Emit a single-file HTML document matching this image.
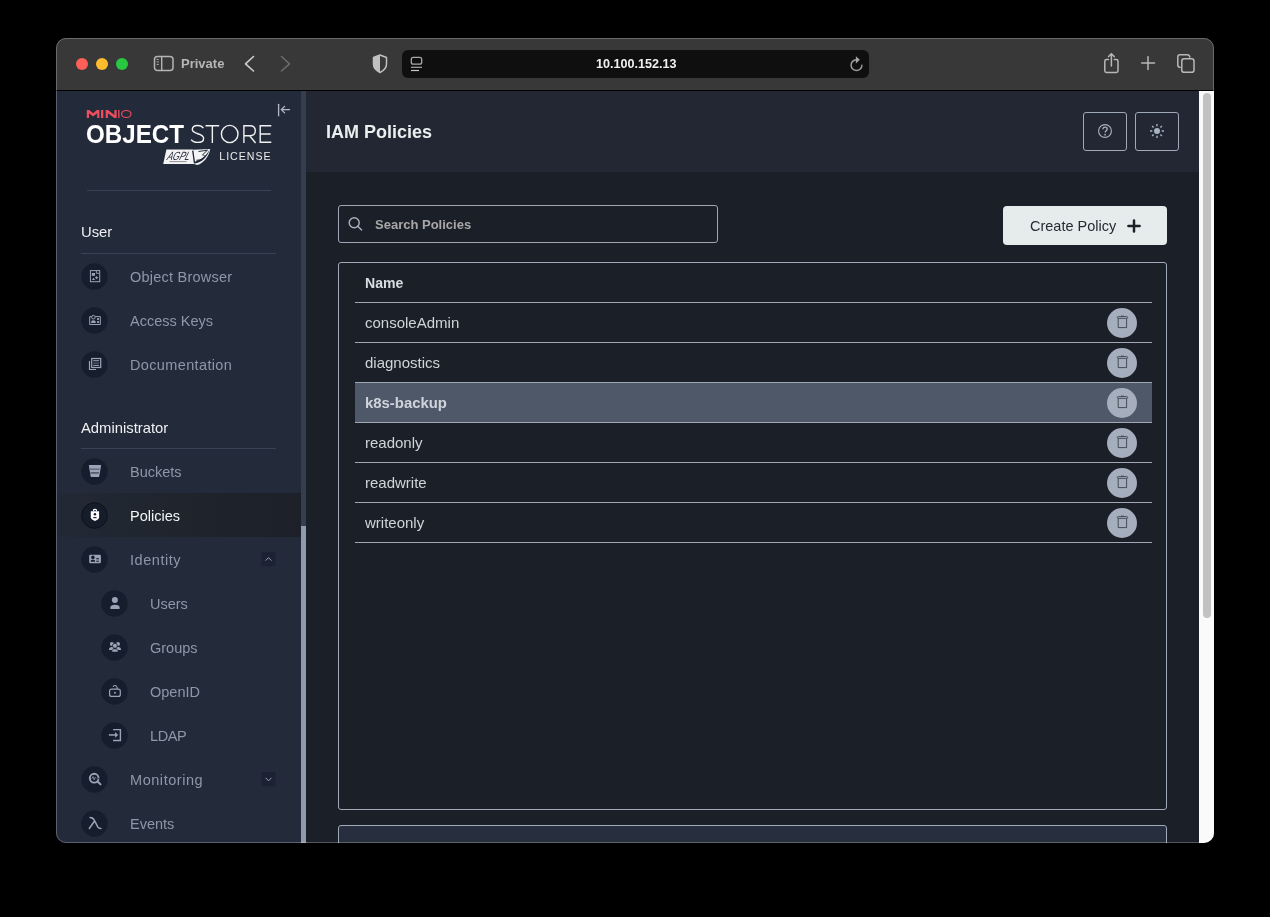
<!DOCTYPE html>
<html><head><meta charset="utf-8">
<style>
*{margin:0;padding:0;box-sizing:border-box}
html,body{width:1270px;height:917px;background:#000;overflow:hidden;font-family:"Liberation Sans",sans-serif;-webkit-font-smoothing:antialiased}
#pg div{will-change:transform}
.a{position:absolute}
#win{position:absolute;left:56px;top:38px;width:1158px;height:805px;border-radius:10px;overflow:hidden;background:#232b3b}
#pg{position:absolute;left:-56px;top:-38px;width:1270px;height:917px}
#winborder{position:absolute;left:56px;top:38px;width:1158px;height:805px;border-radius:10px;border:1px solid rgba(255,255,255,0.25);pointer-events:none}
.dot{position:absolute;width:12px;height:12px;border-radius:50%;top:58px}
.sec{will-change:transform;position:absolute;left:81px;font-size:14.8px;color:#eef0f2;line-height:18px}
.hr{position:absolute;height:1px;background:#394254}
.item{will-change:transform;position:absolute;font-size:14.5px;color:#8e97a7;line-height:18px}
.circ{position:absolute;width:26px;height:26px;border-radius:50%;background:#172030}
.circ svg{position:absolute;left:0;top:0}
.tline{position:absolute;left:355px;width:797px;height:1px;background:#a0a8b6}
.rowtxt{will-change:transform;position:absolute;left:365px;font-size:15px;color:#d0d4da;line-height:18px}
.del{position:absolute;left:1107px;width:30px;height:30px;border-radius:50%;background:#9ea7b6}
</style></head><body>
<div id="win"><div id="pg">
  <!-- toolbar -->
  <div class="a" style="left:56px;top:38px;width:1158px;height:52px;background:#383838"></div>
  <div class="a" style="left:56px;top:90px;width:1158px;height:1px;background:#000"></div>
  <div class="dot" style="left:76px;background:#fe5f57"></div>
  <div class="dot" style="left:96px;background:#febc2e"></div>
  <div class="dot" style="left:116px;background:#28c840"></div>
  <svg class="a" style="left:150px;top:50px" width="30" height="26" viewBox="0 0 30 26">
    <rect x="4.5" y="6.5" width="18.5" height="14" rx="3" fill="none" stroke="#b4b4b4" stroke-width="1.5"/>
    <line x1="11.7" y1="6.5" x2="11.7" y2="20.5" stroke="#b4b4b4" stroke-width="1.4"/>
    <line x1="6.7" y1="9.4" x2="8.7" y2="9.4" stroke="#b4b4b4" stroke-width="1"/>
    <line x1="6.7" y1="11.9" x2="8.7" y2="11.9" stroke="#b4b4b4" stroke-width="1"/>
    <line x1="6.7" y1="14.4" x2="8.7" y2="14.4" stroke="#b4b4b4" stroke-width="1"/>
  </svg>
  <div class="a" style="left:181px;top:56px;font-size:13px;font-weight:bold;color:#b6b6b6;line-height:16px">Private</div>
  <svg class="a" style="left:240px;top:52px" width="20" height="24" viewBox="0 0 20 24">
    <polyline points="13.5,4.5 5.5,11.8 13.5,19" fill="none" stroke="#cfcfcf" stroke-width="1.6" stroke-linecap="round" stroke-linejoin="round"/>
  </svg>
  <svg class="a" style="left:276px;top:52px" width="20" height="24" viewBox="0 0 20 24">
    <polyline points="5.5,4.5 13.5,11.8 5.5,19" fill="none" stroke="#6a6a6a" stroke-width="1.6" stroke-linecap="round" stroke-linejoin="round"/>
  </svg>
  <svg class="a" style="left:370px;top:52px" width="20" height="24" viewBox="0 0 20 24">
    <path d="M10 3 L16.5 5.5 L16.5 12 C16.5 16 13.5 18.8 10 20.5 C6.5 18.8 3.5 16 3.5 12 L3.5 5.5 Z" fill="none" stroke="#c0c0c0" stroke-width="1.5" stroke-linejoin="round"/>
    <path d="M10 3 L3.5 5.5 L3.5 12 C3.5 16 6.5 18.8 10 20.5 Z" fill="#c0c0c0"/>
  </svg>
  <div class="a" style="left:402px;top:50px;width:467px;height:28px;border-radius:6px;background:#0f0f0f"></div>
  <svg class="a" style="left:408px;top:54px" width="18" height="20" viewBox="0 0 18 20">
    <rect x="3.3" y="3.3" width="10.4" height="6.9" rx="2" fill="none" stroke="#a8a8a8" stroke-width="1.3"/>
    <line x1="3" y1="13.3" x2="14" y2="13.3" stroke="#a8a8a8" stroke-width="1.2"/>
    <line x1="3" y1="16.5" x2="11" y2="16.5" stroke="#c8c8c8" stroke-width="1.2"/>
  </svg>
  <div class="a" style="left:596px;top:56px;font-size:12.6px;font-weight:bold;color:#f0f0f0;line-height:16px">10.100.152.13</div>
  <svg class="a" style="left:846px;top:52px" width="22" height="24" viewBox="846 52 22 24">
    <path d="M861.9 65.2 A5.4 5.4 0 1 1 856.3 59.7" fill="none" stroke="#9c9c9c" stroke-width="1.5" stroke-linecap="round"/>
    <polygon points="855.9,56.2 859.8,59.8 855.9,63.4" fill="#a8a8a8"/>
  </svg>
  <svg class="a" style="left:1100px;top:50px" width="24" height="26" viewBox="0 0 24 26">
    <path d="M8.5 9.5 L6.5 9.5 Q4.8 9.5 4.8 11.2 L4.8 20.8 Q4.8 22.5 6.5 22.5 L16.3 22.5 Q18 22.5 18 20.8 L18 11.2 Q18 9.5 16.3 9.5 L14.3 9.5" fill="none" stroke="#b8b8b8" stroke-width="1.5" stroke-linecap="round"/>
    <line x1="11.4" y1="4" x2="11.4" y2="16" stroke="#b8b8b8" stroke-width="1.5" stroke-linecap="round"/>
    <polyline points="8.6,6.6 11.4,3.7 14.2,6.6" fill="none" stroke="#b8b8b8" stroke-width="1.5" stroke-linecap="round" stroke-linejoin="round"/>
  </svg>
  <svg class="a" style="left:1138px;top:53px" width="20" height="20" viewBox="0 0 20 20">
    <line x1="3.7" y1="10" x2="16.5" y2="10" stroke="#b8b8b8" stroke-width="1.5" stroke-linecap="round"/>
    <line x1="10" y1="3.7" x2="10" y2="16.5" stroke="#b8b8b8" stroke-width="1.5" stroke-linecap="round"/>
  </svg>
  <svg class="a" style="left:1174px;top:51px" width="24" height="24" viewBox="0 0 24 24">
    <path d="M6.7 16.5 Q3.8 16.5 3.8 14 L3.8 6 Q3.8 3.8 6 3.8 L13.5 3.8 Q15.7 3.8 15.9 6.8" fill="none" stroke="#b8b8b8" stroke-width="1.5"/>
    <rect x="7.8" y="7.8" width="12.2" height="13.5" rx="2.4" fill="none" stroke="#b8b8b8" stroke-width="1.5"/>
  </svg>

  <!-- sidebar -->
  <div class="a" style="left:56px;top:91px;width:245px;height:752px;background:#232b3b"></div>
  <div class="a" style="left:301px;top:91px;width:5px;height:752px;background:#353e4f"></div>
  <div class="a" style="left:301px;top:526px;width:5px;height:317px;background:#8f9aae"></div>

  <!-- logo -->
  <svg class="a" style="left:0;top:0" width="310" height="200" viewBox="0 0 310 200">
    <g fill="#ee4d5d">
      <polygon points="86.8,118 86.8,110 89.3,110 93.1,113.3 96.9,110 99.4,110 99.4,118 97.2,118 97.2,113.3 93.1,116.4 89,113.3 89,118"/>
      <polygon points="105.7,118 105.7,110 108,110 114.4,114.9 114.4,110 116.6,110 116.6,118 114.3,118 107.9,113.2 107.9,118"/>
    </g>
    <rect x="101" y="110" width="2.3" height="8" fill="#ee4d5d"/>
    <rect x="118.2" y="110" width="1.3" height="8" fill="#ee4d5d"/>
    <ellipse cx="126.3" cy="114" rx="4.7" ry="3.5" fill="none" stroke="#ee4d5d" stroke-width="1.2"/>
    <text x="86" y="143" font-family="Liberation Sans" font-weight="bold" font-size="25" fill="#ffffff" textLength="98" lengthAdjust="spacingAndGlyphs">OBJECT</text>
    <g fill="none" stroke="#f2f2f2" stroke-width="1.4">
      <path d="M203.3 128.2 C202 126 199.8 125.5 197.6 125.5 C194.2 125.5 192.3 127.3 192.3 129.6 C192.3 134.8 203.6 132.6 203.6 138.4 C203.6 141 201.2 142.4 197.6 142.4 C194.6 142.4 192.3 141.4 191.2 139.6"/>
      <path d="M205.5 125.7 H219.2 M212.35 125.7 V143"/>
      <ellipse cx="229.7" cy="134" rx="8.3" ry="8.6"/>
      <path d="M243.9 143 V125.7 H249.8 C253.4 125.7 255.3 127.9 255.3 130.7 C255.3 133.5 253.4 135.7 249.8 135.7 H243.9 M249.6 135.7 L255.6 143"/>
      <path d="M271.3 125.7 H260.2 V142.3 H271.3 M260.2 134 H270.6"/>
    </g>
    <path d="M166.4 149.5 L193 149.5 L194 163.9 L163.2 163.9 Z" fill="#f4f4f4"/>
    <path d="M193 149.7 L210.2 149 C209.5 155.5 203.5 163.5 197.2 165 L194 163.9 Z" fill="#f4f4f4"/>
    <g transform="translate(166.5,159.6) skewX(-18)"><text x="0" y="0" font-family="Liberation Sans" font-style="italic" font-size="12" fill="#232b3b" textLength="22.5" lengthAdjust="spacingAndGlyphs">AGPL</text></g>
    <rect x="169.5" y="161.2" width="17" height="0.9" fill="#232b3b" opacity="0.55"/>
    <path d="M192.7 150.6 L194.6 163.4" stroke="#232b3b" stroke-width="1.3" fill="none"/>
    <path d="M194.6 163.6 C201.5 163.2 208 156.5 209.6 149.6 C207 155 201 160.5 195.5 161.2 Z" fill="#232b3b"/>
    <path d="M198.5 151.5 C202 151 205 150.5 207.5 150.2 L202.5 154.8 C205 155 205.5 157 203 158.5 C201 159.8 198.5 160.2 196.5 160.2" fill="none" stroke="#232b3b" stroke-width="1"/>
    <text x="219.3" y="159.8" font-family="Liberation Sans" font-size="10.6" fill="#ececec" textLength="51.2" lengthAdjust="spacing">LICENSE</text>
    <g fill="none" stroke="#b3b8c2" stroke-width="1.3" stroke-linecap="round">
      <path d="M278.6 104.3 V115.8"/>
      <path d="M281.5 109.6 H289.6 M284.6 106.4 L281.4 109.6 L284.6 112.9"/>
    </g>
    <rect x="87" y="190" width="184" height="1" fill="#394254"/>
  </svg>

  <div class="sec" style="top:223px">User</div>
  <div class="hr" style="left:81px;top:253px;width:195px"></div>
  <div class="sec" style="top:419px">Administrator</div>
  <div class="hr" style="left:81px;top:448px;width:195px"></div>

  <!-- selected row -->
  <div class="a" style="left:57px;top:493px;width:244px;height:44px;background:linear-gradient(90deg,#222936 0%,#20262f 35%,#1d2028 100%)"></div>

  <div class="item" style="left:130px;top:268px;letter-spacing:0.23px">Object Browser</div>
  <div class="item" style="left:130px;top:312px">Access Keys</div>
  <div class="item" style="left:130px;top:356px;letter-spacing:0.36px">Documentation</div>
  <div class="item" style="left:130px;top:463px">Buckets</div>
  <div class="item" style="left:130px;top:507px;color:#f2f4f6">Policies</div>
  <div class="item" style="left:130px;top:551px;letter-spacing:0.55px">Identity</div>
  <div class="item" style="left:150px;top:595px">Users</div>
  <div class="item" style="left:150px;top:639px">Groups</div>
  <div class="item" style="left:150px;top:683px">OpenID</div>
  <div class="item" style="left:150px;top:727px;letter-spacing:-0.4px">LDAP</div>
  <div class="item" style="left:130px;top:771px;letter-spacing:0.55px">Monitoring</div>
  <div class="item" style="left:130px;top:815px">Events</div>

  <svg class="a" style="left:0;top:0" width="310" height="917" viewBox="0 0 310 917">
    <g fill="#161e2d">
      <circle cx="94.5" cy="276.5" r="13.25"/>
      <circle cx="94.5" cy="320.5" r="13.25"/>
      <circle cx="94.5" cy="364.5" r="13.25"/>
      <circle cx="94.5" cy="471.5" r="13.25"/>
      <circle cx="94.5" cy="559.5" r="13.25"/>
      <circle cx="114.5" cy="603.5" r="13.25"/>
      <circle cx="114.5" cy="647.5" r="13.25"/>
      <circle cx="114.5" cy="691.5" r="13.25"/>
      <circle cx="114.5" cy="735.5" r="13.25"/>
      <circle cx="94.5" cy="779.5" r="13.25"/>
      <circle cx="94.5" cy="823.5" r="13.25"/>
    </g>
    <circle cx="94.5" cy="515.5" r="12.8" fill="#151c2a" stroke="#0c1017" stroke-width="0.9"/>
    <!-- chevron boxes -->
    <rect x="261.5" y="552.2" width="14" height="14" fill="#1c2233"/>
    <path d="M265.6 560.6 L268.5 557.6 L271.4 560.6" fill="none" stroke="#9aa3b3" stroke-width="1"/>
    <rect x="261.5" y="772.3" width="14" height="14" fill="#1c2233"/>
    <path d="M265.6 777.8 L268.5 780.8 L271.4 777.8" fill="none" stroke="#9aa3b3" stroke-width="1"/>

    <g fill="#9ba4b6" stroke="none">
      <!-- object browser -->
      <g transform="translate(94.5,276.5)">
        <rect x="-4.1" y="-5.9" width="9.3" height="11.1" fill="none" stroke="#9ba4b6" stroke-width="1"/>
        <path d="M1.9 -5.9 V-3.2 H5.2" fill="none" stroke="#9ba4b6" stroke-width="0.9"/>
        <rect x="-2.7" y="-3.5" width="3.2" height="2.8"/>
        <path d="M-2.6 3.5 L-1 1.2 L0.5 3.5 Z"/>
        <path d="M2 -0.4 L3.6 1.2 L2 2.8 L0.5 1.2 Z"/>
      </g>
      <!-- access keys -->
      <g transform="translate(94.5,320.5)">
        <path d="M-3 -3.9 H-4.8 V4 H5.8 V-3.9 H0.8" fill="none" stroke="#9ba4b6" stroke-width="1"/>
        <circle cx="-1.1" cy="-3.3" r="1.8" fill="none" stroke="#9ba4b6" stroke-width="1"/>
        <path d="M-3.4 2.6 C-3.4 0.4 -2.5 -0.2 -1.1 -0.2 C0.3 -0.2 1.3 0.4 1.3 2.6 Z"/>
        <rect x="2.5" y="-2.4" width="2" height="1.8"/>
        <rect x="2.5" y="0.6" width="2" height="1.8"/>
      </g>
      <!-- documentation -->
      <g transform="translate(94.5,364.5)">
        <rect x="-2.8" y="-6" width="9" height="9" fill="none" stroke="#9ba4b6" stroke-width="1.2"/>
        <path d="M-5 -3.5 V5 H1.5" fill="none" stroke="#9ba4b6" stroke-width="1.2"/>
        <rect x="-1.3" y="-4.3" width="5.9" height="1"/>
        <rect x="-1.3" y="-1.9" width="5.9" height="1" opacity="0.6"/>
        <rect x="-1.3" y="0.4" width="5.9" height="1"/>
      </g>
      <!-- buckets -->
      <g transform="translate(94.5,471.5)">
        <path d="M-5.6 -6.6 H6.6 L6.2 -3.5 L4.6 5.6 H-3.7 L-5.3 -3.5 Z"/>
        <rect x="-4.5" y="-2.9" width="9.5" height="1.1" fill="#4e586b"/>
        <rect x="-4" y="0.6" width="8.4" height="1.6" fill="#4e586b"/>
      </g>
      <!-- identity -->
      <g transform="translate(94.5,559.5)">
        <rect x="-5.3" y="-4.7" width="11.7" height="8.4" rx="1.2"/>
        <circle cx="-1.6" cy="-2.1" r="1.8" fill="#161e2d"/>
        <path d="M-3.8 2.3 C-3.8 0.6 -3 0.3 -1.6 0.3 C-0.2 0.3 0.6 0.6 0.6 2.3 Z" fill="#161e2d"/>
        <rect x="1.7" y="-1.5" width="2.8" height="0.8" fill="#161e2d"/>
        <rect x="1.7" y="0" width="2.8" height="0.8" fill="#161e2d" opacity="0.6"/>
        <rect x="1.7" y="1.4" width="2.8" height="0.8" fill="#161e2d"/>
      </g>
      <!-- users -->
      <g transform="translate(114.5,603.5)">
        <circle cx="0.4" cy="-3.5" r="3"/>
        <path d="M-4.1 5.5 V4 C-4.1 2 -2.5 1.2 0.5 1.2 C3.5 1.2 5.1 2 5.1 4 V5.5 Z"/>
      </g>
      <!-- groups -->
      <g transform="translate(114.5,647.5)">
        <circle cx="-2.6" cy="-3.4" r="2"/>
        <circle cx="3.5" cy="-3.4" r="2"/>
        <path d="M-5.6 2.6 C-5.6 0.3 -4.5 -0.5 -2.6 -0.5 C-1.5 -0.5 -1 -0.3 -0.7 0 L-1.5 2.6 Z"/>
        <path d="M6.6 2.6 C6.6 0.3 5.5 -0.5 3.6 -0.5 C2.5 -0.5 2 -0.3 1.7 0 L2.5 2.6 Z"/>
        <circle cx="0.45" cy="-1.7" r="2.5" stroke="#161e2d" stroke-width="0.8"/>
        <path d="M-2.6 4.6 V3.6 C-2.6 2 -1.5 1.4 0.45 1.4 C2.4 1.4 3.5 2 3.5 3.6 V4.6 Z" stroke="#161e2d" stroke-width="0.6"/>
      </g>
      <!-- openid -->
      <g transform="translate(114.5,691.5)">
        <rect x="-4.9" y="-2.4" width="10.7" height="7.3" rx="2" fill="none" stroke="#9ba4b6" stroke-width="1.2"/>
        <path d="M-1.4 -4.6 C-1 -6.6 2.2 -6.6 2.6 -4.2 V-2.6" fill="none" stroke="#9ba4b6" stroke-width="1.1"/>
        <circle cx="0.45" cy="1.2" r="1"/>
      </g>
      <!-- ldap -->
      <g transform="translate(114.5,735.5)">
        <path d="M-1.4 -5.9 H5.9 V5 H-1.4" fill="none" stroke="#9ba4b6" stroke-width="1.4"/>
        <rect x="-5.6" y="-1.3" width="7" height="1.5"/>
        <path d="M0.6 -3.4 L3.6 -0.55 L0.6 2.3 Z"/>
      </g>
      <!-- monitoring -->
      <g transform="translate(94.5,779.5)">
        <circle cx="-0.3" cy="-1.3" r="4.4" fill="none" stroke="#9ba4b6" stroke-width="1.9"/>
        <path d="M3.4 2.3 L6 4.9" fill="none" stroke="#9ba4b6" stroke-width="2" stroke-linecap="round"/>
        <path d="M-2.8 -0.6 L-1.4 -3 L-0.4 0.4 L0.7 -2.2 L1.6 -1" fill="none" stroke="#9ba4b6" stroke-width="0.7"/>
        <rect x="3.6" y="-1.6" width="3" height="0.9" fill="#161e2d"/>
      </g>
      <!-- events -->
      <g transform="translate(94.5,823.5)">
        <path d="M-4.4 -6 C-2.3 -6 -1 -5 0 -3 L3.4 3.6 C4 4.6 4.8 5 6.4 5 M-0.3 -2 L-5.2 5" fill="none" stroke="#9ba4b6" stroke-width="1.5" stroke-linecap="round"/>
      </g>
      <!-- policies -->
      <g transform="translate(94.5,515.5)" fill="#ffffff">
        <path d="M-3.7 -4.3 H4.6 V1.8 C4.6 3.6 2.5 4.8 0.45 5.6 C-1.6 4.8 -3.7 3.6 -3.7 1.8 Z"/>
        <path d="M-1 -4.2 V-5 C-1 -6.6 1.9 -6.6 1.9 -5 V-4.2" fill="none" stroke="#ffffff" stroke-width="1.2"/>
        <circle cx="0.45" cy="-1.2" r="1.2" fill="#151c2a"/>
        <rect x="-1.3" y="1.6" width="3.4" height="1.1" fill="#151c2a"/>
      </g>
    </g>
  </svg>

  <!-- main -->
  <div class="a" style="left:306px;top:91px;width:893px;height:752px;background:#1b1f27"></div>
  <div class="a" style="left:306px;top:91px;width:893px;height:81px;background:#222733"></div>
  <div class="a" style="left:1199px;top:91px;width:15px;height:752px;background:#fafafa"></div>
  <div class="a" style="left:1203px;top:93px;width:8px;height:525px;border-radius:4px;background:#c2c2c2"></div>
  <!-- main content -->
  <div class="a" style="left:326px;top:121px;font-size:18px;font-weight:bold;color:#eaeeee;line-height:22px">IAM Policies</div>
  <div class="a" style="left:1083px;top:112px;width:44px;height:39px;border:1px solid #a0a9b9;border-radius:3px"></div>
  <div class="a" style="left:1135px;top:112px;width:44px;height:39px;border:1px solid #a0a9b9;border-radius:3px"></div>
  <svg class="a" style="left:1090px;top:116px" width="80" height="30" viewBox="1090 116 80 30">
    <circle cx="1105" cy="131" r="6.4" fill="none" stroke="#a9b2c2" stroke-width="1.1"/>
    <path d="M1102.9 129.3 C1102.9 127.8 1103.8 127.1 1105 127.1 C1106.3 127.1 1107.2 127.9 1107.2 129.1 C1107.2 130.7 1105.1 130.9 1105.1 132.6" fill="none" stroke="#a9b2c2" stroke-width="1.4"/>
    <circle cx="1105.1" cy="134.7" r="0.85" fill="#a9b2c2"/>
    <circle cx="1157" cy="131" r="3" fill="#a9b2c2"/>
    <g stroke="#a9b2c2" stroke-width="1.4">
      <path d="M1157 124 V126.3 M1157 135.7 V138 M1150 131 H1152.3 M1161.7 131 H1164 M1152.1 126.1 L1153.6 127.6 M1160.4 134.4 L1161.9 135.9 M1152.1 135.9 L1153.6 134.4 M1160.4 127.6 L1161.9 126.1"/>
    </g>
  </svg>

  <div class="a" style="left:338px;top:205px;width:380px;height:38px;border:1px solid #9ea8b8;border-radius:3px"></div>
  <svg class="a" style="left:340px;top:210px" width="30" height="28" viewBox="340 210 30 28">
    <circle cx="354.2" cy="222.7" r="5" fill="none" stroke="#a9b2c2" stroke-width="1.4"/>
    <path d="M357.8 226.3 L361.6 230.1" stroke="#a9b2c2" stroke-width="1.4" stroke-linecap="round"/>
  </svg>
  <div class="a" style="left:374.5px;top:217px;font-size:13px;font-weight:bold;color:#a8a8a8;line-height:16px">Search Policies</div>

  <div class="a" style="left:1003px;top:206px;width:164px;height:39px;border-radius:4px;background:#e6ebeb"></div>
  <div class="a" style="left:1029.5px;top:217px;font-size:14.5px;color:#262b33;line-height:18px">Create Policy</div>
  <svg class="a" style="left:1124px;top:216px" width="20" height="20" viewBox="1124 216 20 20">
    <path d="M1128.4 226 H1139.6 M1134 220.5 V231.5" stroke="#1b1f27" stroke-width="2.5" stroke-linecap="round"/>
  </svg>

  <div class="a" style="left:338px;top:262px;width:829px;height:548px;border:1px solid #a0a9b8;border-radius:3px"></div>
  <div class="a" style="left:365px;top:274px;font-size:14.1px;font-weight:bold;color:#d9dde2;line-height:18px">Name</div>
  <div class="tline" style="top:302px"></div>
  <div class="a" style="left:355px;top:383px;width:797px;height:39px;background:#4e5869"></div>
  <div class="tline" style="top:342px"></div>
  <div class="tline" style="top:382px"></div>
  <div class="tline" style="top:422px"></div>
  <div class="tline" style="top:462px"></div>
  <div class="tline" style="top:502px"></div>
  <div class="tline" style="top:542px"></div>
  <div class="rowtxt" style="top:313.5px">consoleAdmin</div>
  <div class="rowtxt" style="top:353.5px">diagnostics</div>
  <div class="rowtxt" style="top:393.5px;font-weight:bold;font-size:14.9px">k8s-backup</div>
  <div class="rowtxt" style="top:433.5px">readonly</div>
  <div class="rowtxt" style="top:473.5px">readwrite</div>
  <div class="rowtxt" style="top:513.5px">writeonly</div>
  <svg class="a" style="left:1100px;top:300px" width="45" height="250" viewBox="1100 300 45 250">
    <g id="trash">
      <circle cx="1122" cy="323" r="15" fill="#a5aebd"/>
      <path d="M1118.2 318.6 V327.6 H1126.6 V318.6" fill="none" stroke="#3a404c" stroke-width="0.9"/>
      <rect x="1117.4" y="316.6" width="10.2" height="1.8" rx="0.6" fill="none" stroke="#3a404c" stroke-width="0.8"/>
      <path d="M1120.8 316.2 H1124.2" stroke="#3a404c" stroke-width="1"/>
    </g>
    <use href="#trash" y="40"/>
    <use href="#trash" y="80"/>
    <use href="#trash" y="120"/>
    <use href="#trash" y="160"/>
    <use href="#trash" y="200"/>
  </svg>

  <div class="a" style="left:338px;top:825px;width:829px;height:30px;border:1px solid #a0a9b8;border-radius:3px;background:#272e3d"></div>
</div></div>
<div id="winborder"></div>
</body></html>
